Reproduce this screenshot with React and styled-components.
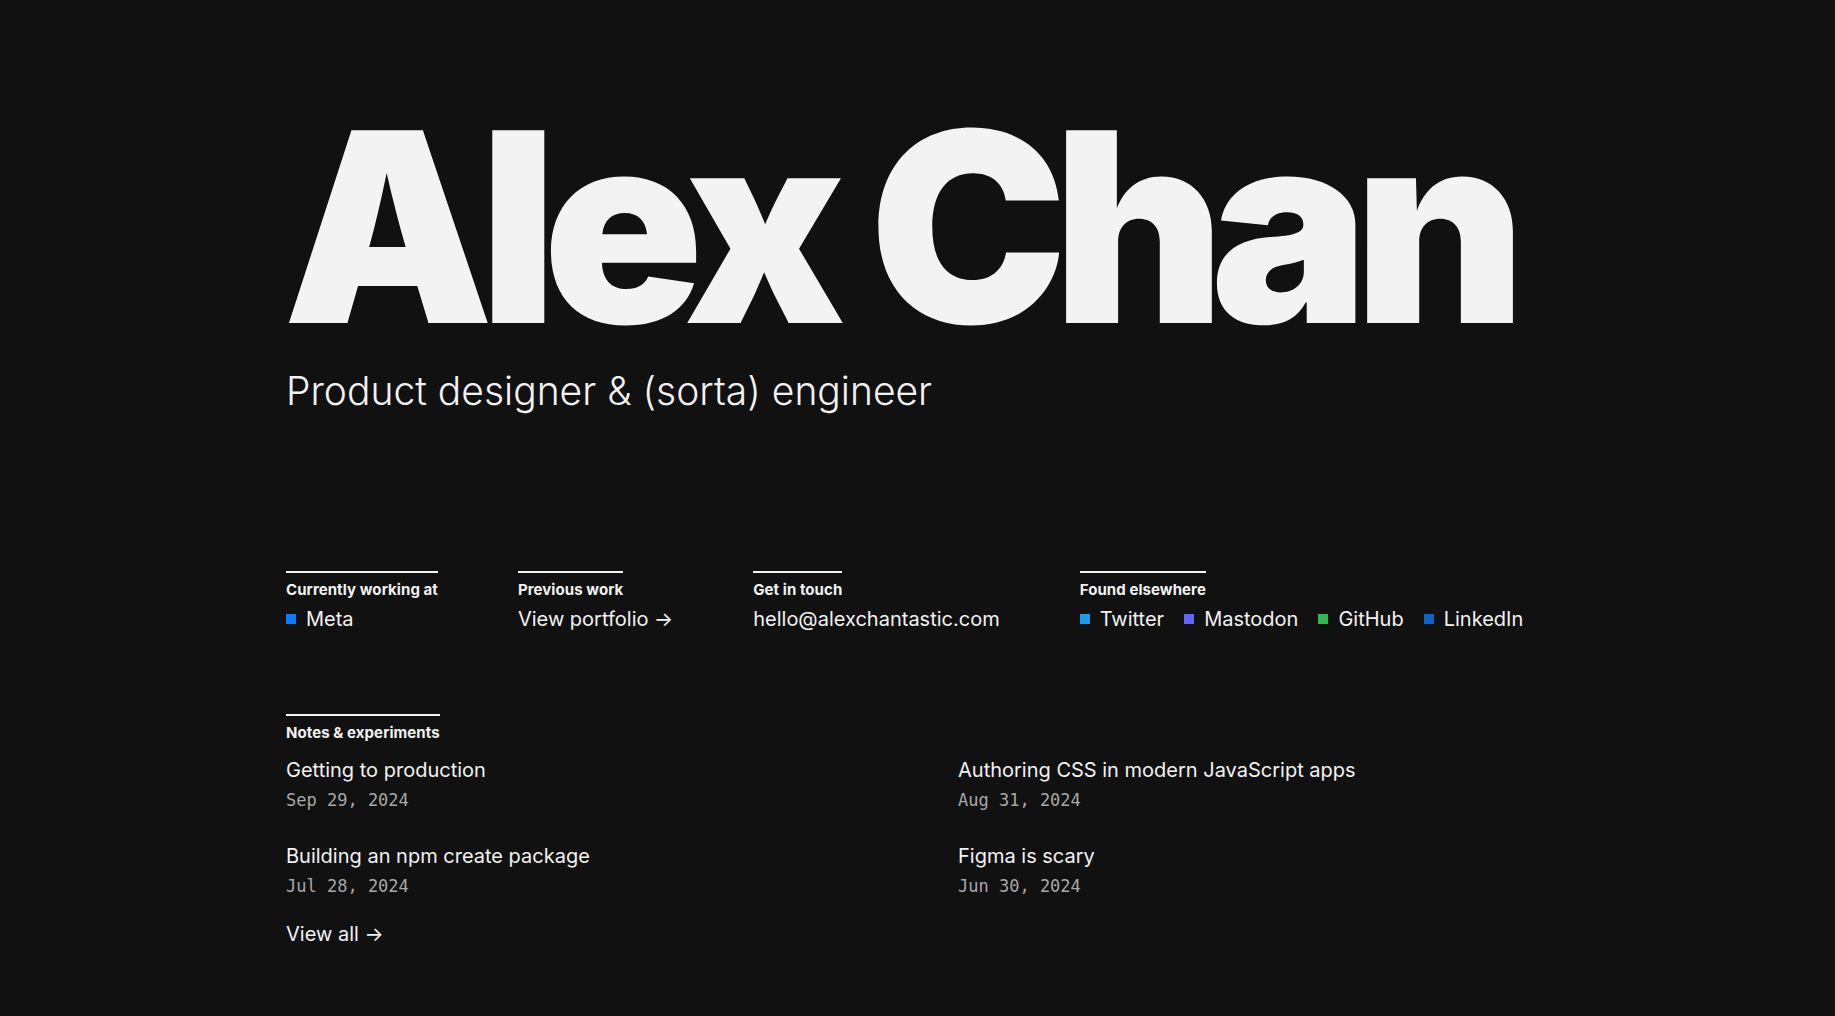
import styled, { createGlobalStyle } from "styled-components";

const GlobalStyle = createGlobalStyle`
  html, body {
    margin: 0;
    padding: 0;
    background: #111111;
  }
  body {
    font-family: Inter, "Noto Sans", sans-serif;
    color: #f2f2f2;
    -webkit-font-smoothing: antialiased;
  }
`;

const Page = styled.main`
  min-height: 1016px;
  box-sizing: border-box;
  padding: 94px 0 0 286px;
`;

const Title = styled.h1`
  margin: 0 0 0 -3px;
  font-family: Inter, sans-serif;
  font-weight: 900;
  font-size: 265px;
  line-height: 1;
  letter-spacing: -0.055em;
  color: #f3f3f3;
  white-space: nowrap;
`;

const Subtitle = styled.p`
  margin: 9px 0 0;
  font-weight: 300;
  font-size: 39px;
  line-height: 1.2;
  color: #f2f2f2;
`;

const InfoRow = styled.section`
  display: flex;
  gap: 80px;
  margin-top: 156px;
`;

const Block = styled.div`
  display: flex;
  flex-direction: column;
  align-items: flex-start;
`;

const Label = styled.h2`
  margin: 0;
  border-top: 2px solid #f2f2f2;
  padding-top: 8px;
  font-size: 15px;
  font-weight: 700;
  line-height: 18px;
  letter-spacing: 0.005em;
  color: #f2f2f2;
`;

const Value = styled.div`
  margin-top: 6px;
  display: flex;
  align-items: center;
  gap: 20px;
  font-size: 20px;
  line-height: 28px;
  color: #f2f2f2;
`;

const Tag = styled.span`
  display: inline-flex;
  align-items: center;
  gap: 10px;

  &::before {
    content: "";
    width: 10px;
    height: 10px;
    background: ${({ $color }) => $color};
  }
`;

const Notes = styled.section`
  margin-top: 81px;
  display: flex;
  flex-direction: column;
  align-items: flex-start;
`;

const NotesGrid = styled.div`
  margin-top: 14px;
  display: grid;
  grid-template-columns: 592px 592px;
  column-gap: 80px;
  row-gap: 30px;
`;

const Note = styled.article`
  display: flex;
  flex-direction: column;
  gap: 4px;
`;

const NoteTitle = styled.div`
  font-size: 20px;
  line-height: 28px;
  color: #f2f2f2;
`;

const NoteDate = styled.time`
  font-family: "DejaVu Sans Mono", "Liberation Mono", monospace;
  font-size: 17px;
  line-height: 24px;
  color: #a8a8a8;
`;

const ViewAll = styled.div`
  margin-top: 22px;
  font-size: 20px;
  line-height: 28px;
  color: #f2f2f2;
`;

const socials = [
  { name: "Twitter", color: "#1d9bf0" },
  { name: "Mastodon", color: "#6364ff" },
  { name: "GitHub", color: "#2dba4e" },
  { name: "LinkedIn", color: "#0a66c2" },
];

const notes = [
  { title: "Getting to production", date: "Sep 29, 2024" },
  { title: "Authoring CSS in modern JavaScript apps", date: "Aug 31, 2024" },
  { title: "Building an npm create package", date: "Jul 28, 2024" },
  { title: "Figma is scary", date: "Jun 30, 2024" },
];

export default function App() {
  return (
    <>
      <GlobalStyle />
      <Page>
        <Title>Alex Chan</Title>
        <Subtitle>Product designer &amp; (sorta) engineer</Subtitle>

        <InfoRow>
          <Block>
            <Label>Currently working at</Label>
            <Value>
              <Tag $color="#0a7cff">Meta</Tag>
            </Value>
          </Block>
          <Block>
            <Label>Previous work</Label>
            <Value>View portfolio →</Value>
          </Block>
          <Block>
            <Label>Get in touch</Label>
            <Value>hello@alexchantastic.com</Value>
          </Block>
          <Block>
            <Label>Found elsewhere</Label>
            <Value>
              {socials.map((s) => (
                <Tag key={s.name} $color={s.color}>{s.name}</Tag>
              ))}
            </Value>
          </Block>
        </InfoRow>

        <Notes>
          <Label>Notes &amp; experiments</Label>
          <NotesGrid>
            {notes.map((n) => (
              <Note key={n.title}>
                <NoteTitle>{n.title}</NoteTitle>
                <NoteDate>{n.date}</NoteDate>
              </Note>
            ))}
          </NotesGrid>
          <ViewAll>View all →</ViewAll>
        </Notes>
      </Page>
    </>
  );
}
